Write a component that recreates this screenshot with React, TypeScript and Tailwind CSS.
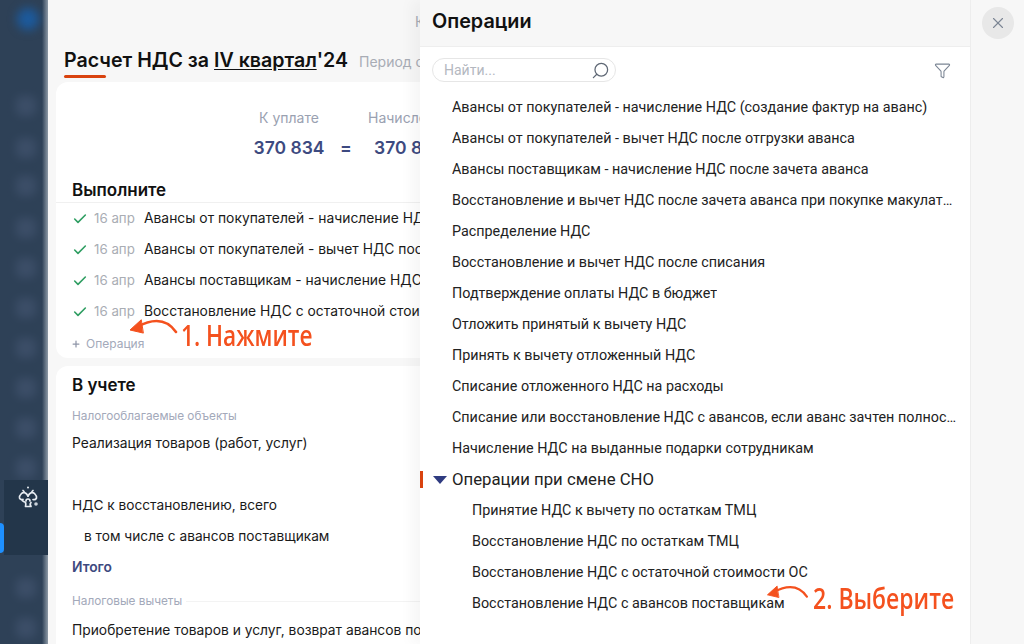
import React from "react";
import { Check, Plus, Search, Filter, X } from "lucide-react";

const operations = [
  "Авансы от покупателей - начисление НДС (создание фактур на аванс)",
  "Авансы от покупателей - вычет НДС после отгрузки аванса",
  "Авансы поставщикам - начисление НДС после зачета аванса",
  "Восстановление и вычет НДС после зачета аванса при покупке макулатуры",
  "Распределение НДС",
  "Восстановление и вычет НДС после списания",
  "Подтверждение оплаты НДС в бюджет",
  "Отложить принятый к вычету НДС",
  "Принять к вычету отложенный НДС",
  "Списание отложенного НДС на расходы",
  "Списание или восстановление НДС с авансов, если аванс зачтен полностью",
  "Начисление НДС на выданные подарки сотрудникам",
];

const subOperations = [
  "Принятие НДС к вычету по остаткам ТМЦ",
  "Восстановление НДС по остаткам ТМЦ",
  "Восстановление НДС с остаточной стоимости ОС",
  "Восстановление НДС с авансов поставщикам",
];

const todo = [
  "Авансы от покупателей - начисление НДС (создание фактур на аванс)",
  "Авансы от покупателей - вычет НДС после отгрузки аванса",
  "Авансы поставщикам - начисление НДС после зачета аванса",
  "Восстановление НДС с остаточной стоимости ОС",
];

const blobs = [96, 138, 176, 218, 258, 298, 338, 378, 418, 458, 578, 618];

const Arrow = ({ className }: { className: string }) => (
  <svg className={className} viewBox="0 0 50 28" fill="none" stroke="#f4511e" strokeLinecap="round" strokeLinejoin="round">
    <path d="M47 17C40 7 28 1 8 12" strokeWidth="2.6" />
    <path d="M12 5L1 15L14 18Z" fill="#f4511e" strokeWidth="1" />
  </svg>
);

const App = () => {
  return (
    <div className="flex h-[644px] w-[1024px] overflow-hidden bg-[#f7f7f7] font-['Inter',sans-serif] text-[#1a1a1a]">
      <aside className="relative flex w-[48px] shrink-0 flex-col bg-[#2e4157]">
        <div className="absolute left-[17px] top-[8px] h-[22px] w-[22px] rounded-full bg-[#1c5a9c] blur-[5px]" />
        {blobs.map((top) => (
          <div
            key={top}
            className="absolute left-[16px] h-[20px] w-[20px] rounded-md bg-[#4a5b78] opacity-50 blur-[5px]"
            style={{ top }}
          />
        ))}
        <div className="absolute right-0 top-0 h-full w-[6px] bg-linear-to-r from-transparent to-[#8d99a6]" />
        <div className="absolute left-[4px] top-[480px] flex h-[75px] w-[44px] justify-center bg-[#23364a] pl-[4px] pt-[6px]">
          <svg width="21" height="23" viewBox="0 0 21 23" fill="none" stroke="#e8edf2" strokeWidth="1.7" strokeLinecap="round" strokeLinejoin="round">
            <circle cx="10" cy="1.6" r="1" fill="#e8edf2" stroke="none" />
            <path d="M5 4.5l1 1M15 4.5l-1 1" />
            <path d="M10 10C8 6 5 6 3.500 7.500 2 9 1 10 1.500 12c.5 1.500 2.500 2 3.500 1.500" />
            <path d="M10 10c2-4 5-4 6.500-2.500C18 9 19 10 18.500 12c-.5 1-2 2-3.500 1.500" />
            <path d="M4 13.500c0 2 2.500 2 3.500 3 .5 1 .5 2 0 4h5.500c-1-1.500-1-3 0-4" />
            <path d="M10 13c-1.500 0-2 1-2 2M10 13c1.500 0 2 1 2 2" />
            <circle cx="18" cy="18" r="1.800" fill="#cbd3db" stroke="none" />
          </svg>
        </div>
        <div className="absolute left-0 top-[523px] h-[30px] w-[4px] rounded-r-sm bg-[#1e90ff]" />
      </aside>

      <main className="w-[372px] shrink-0 overflow-hidden pl-[8px]">
        <div className="flex h-[82px] flex-col justify-between whitespace-nowrap pl-[8px] pt-[12px]">
          <div className="pl-[351px] text-[14px] leading-[20px] text-[#a8acb5]">Казначейство</div>
          <div className="flex items-baseline">
            <h1 className="relative pb-[8px] text-[19.6px] font-semibold leading-[28px] text-[#111]">
              Расчет НДС за <span className="underline underline-offset-2">IV квартал</span>'24
              <span className="absolute bottom-[4px] left-0 h-[3px] w-[42px] rounded-full bg-[#d9430f]" />
            </h1>
            <span className="ml-[11px] text-[14px] text-[#a8acb5]">Период с</span>
          </div>
        </div>

        <section className="h-[276px] w-[400px] rounded-xl bg-white">
          <div className="flex whitespace-nowrap pl-[198px] pt-[26px]">
            <div className="flex w-[70px] flex-col items-center">
              <span className="text-[14px] leading-[20px] text-[#9aa1b1]">К уплате</span>
              <span className="mt-[10px] text-[17.5px] font-semibold leading-[20px] text-[#3d4a80]">370 834</span>
            </div>
            <span className="ml-[16px] mt-[30px] w-[12px] text-[17.5px] font-semibold leading-[20px] text-[#3d4a80]">=</span>
            <div className="ml-[16px] flex flex-col">
              <span className="text-[14px] leading-[20px] text-[#9aa1b1]">Начислено</span>
              <span className="mt-[10px] pl-[6px] text-[17.5px] font-semibold leading-[20px] text-[#3d4a80]">370 834</span>
            </div>
          </div>
          <h2 className="mt-[20px] border-b border-[#f0f0f0] pl-[16px] text-[17px] font-semibold leading-[24px] text-[#111]">
            Выполните
          </h2>
          <ul className="pl-[16px]">
            {todo.map((item) => (
              <li key={item} className="flex h-[31px] items-center whitespace-nowrap text-[13.85px]">
                <Check className="mr-[6px] h-[16px] w-[16px] shrink-0 text-[#2f9e62]" strokeWidth={2.4} />
                <span className="w-[50px] shrink-0 text-[13.3px] text-[#a9adb4]">16 апр</span>
                <span>{item}</span>
              </li>
            ))}
          </ul>
          <div className="relative flex items-center pl-[15px] pt-[9px] text-[12px] leading-[16px] text-[#a3a9ba]">
            <Plus className="mr-[5px] h-[10px] w-[10px] text-[#8f96a8]" strokeWidth={3} />
            Операция
            <Arrow className="absolute left-[73px] top-[-12px] h-[28px] w-[50px]" />
            <span className="absolute left-[125px] top-[-10px] origin-left scale-x-[0.81] whitespace-nowrap font-['Open_Sans',sans-serif] text-[28px] font-semibold leading-[36px] text-[#f4511e]">
              1. Нажмите
            </span>
          </div>
        </section>

        <section className="mt-[8px] h-[300px] w-[400px] whitespace-nowrap rounded-xl bg-white pl-[16px]">
          <h2 className="pt-[7px] text-[17px] font-semibold leading-[24px] text-[#111]">В учете</h2>
          <p className="mt-[11px] text-[11.8px] leading-[16px] text-[#a3a9ba]">Налогооблагаемые объекты</p>
          <p className="mt-[9px] text-[13.85px] leading-[20px]">Реализация товаров (работ, услуг)</p>
          <p className="mt-[42px] text-[13.7px] leading-[20px]">НДС к восстановлению, всего</p>
          <p className="mt-[11px] pl-[12px] text-[13.7px] leading-[20px]">в том числе с авансов поставщикам</p>
          <p className="mt-[11px] text-[13.8px] font-semibold leading-[20px] text-[#3d4a80]">Итого</p>
          <div className="mt-[16px] flex items-center gap-[4px]">
            <span className="text-[11.8px] leading-[16px] text-[#a3a9ba]">Налоговые вычеты</span>
            <div className="h-px flex-1 bg-[#f3f3f3]" />
          </div>
          <p className="mt-[11px] text-[13.8px] leading-[20px]">Приобретение товаров и услуг, возврат авансов по</p>
        </section>
      </main>

      <div className="relative flex w-[550px] shrink-0 flex-col bg-white font-['Roboto',sans-serif] text-[#222] shadow-[-8px_0_14px_rgba(0,0,0,0.04)]">
        <header className="flex h-[47px] items-center border-b border-[#eeeeee] bg-[#f7f7f7] pb-[2px] pl-[12px] font-['Inter',sans-serif] text-[19.8px] font-semibold text-[#111]">
          Операции
        </header>
        <div className="flex h-[44px] items-center justify-between pl-[12px] pr-[19px] pt-[2px]">
          <div className="flex h-[24px] w-[184px] items-center justify-between rounded-full border border-[#e6e6e6] pl-[11px] pr-[5px] text-[14px] text-[#b4b8bf]">
            Найти...
            <Search className="h-[19px] w-[19px] -scale-x-100 text-[#5f6875]" strokeWidth={1.6} />
          </div>
          <Filter className="h-[17px] w-[17px] text-[#7b8594]" strokeWidth={1.5} />
        </div>
        <ul className="pt-[1px] text-[14.35px]">
          {operations.map((name) => (
            <li key={name} className="flex h-[31px] items-center pl-[32px] pr-[12px]">
              <span className="truncate">{name}</span>
            </li>
          ))}
          <li className="relative flex h-[31px] items-center pl-[13px] text-[16.75px]">
            <span className="absolute left-0 top-[7px] h-[17px] w-[3px] bg-[#d9430f]" />
            <span className="mr-[5px] h-0 w-0 border-x-[7px] border-t-[8px] border-x-transparent border-t-[#2f3b80]" />
            Операции при смене СНО
          </li>
          {subOperations.map((name) => (
            <li key={name} className="flex h-[31px] items-center pl-[52px]">
              {name}
            </li>
          ))}
        </ul>
        <Arrow className="absolute left-[346px] top-[582px] h-[24px] w-[44px]" />
        <span className="absolute left-[393px] top-[580px] origin-left scale-x-[0.82] whitespace-nowrap font-['Open_Sans',sans-serif] text-[28px] font-semibold leading-[36px] text-[#f4511e]">
          2. Выберите
        </span>
      </div>

      <div className="flex flex-1 justify-center border-l border-[#eeeeee] bg-[#f7f7f7] pt-[7px]">
        <button className="flex h-[32px] w-[32px] items-center justify-center rounded-full bg-[#e8e8e8] text-[#7b8594]">
          <X className="h-[18px] w-[18px]" strokeWidth={1.5} />
        </button>
      </div>
    </div>
  );
};

export default App;
